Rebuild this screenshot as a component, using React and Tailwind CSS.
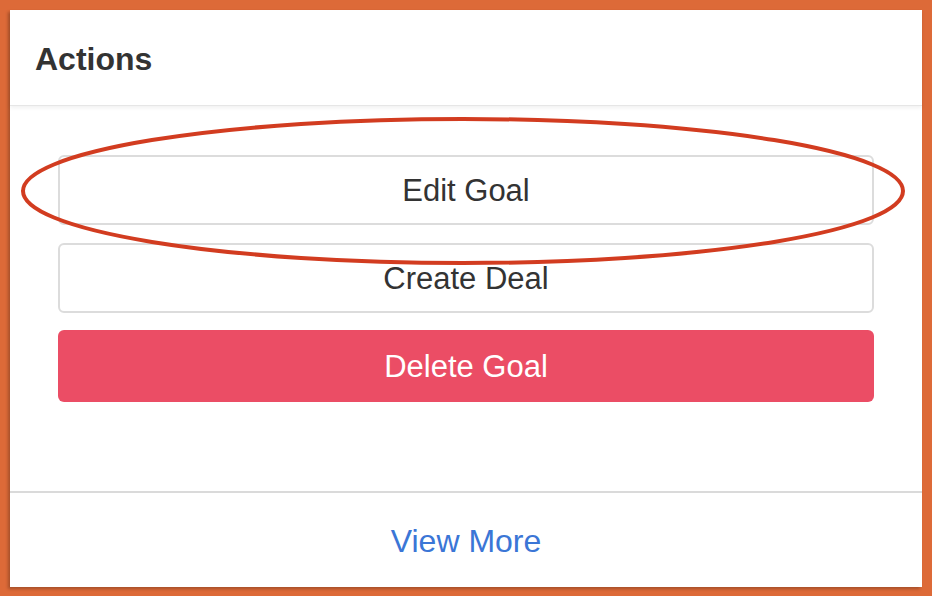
import React from "react";

const font = { fontFamily: '"Liberation Sans", Arial, sans-serif' };

const ActionButton = ({ label, danger, className = "" }) => (
  <button
    className={
      (danger
        ? "h-[72px] w-full rounded-[6px] bg-[#eb4d65] pt-[3px] text-[31px] text-white "
        : "h-[70px] w-full rounded-[6px] border-2 border-[#dcdcdc] bg-white pt-[3px] text-[31px] text-[#333333] ") + className
    }
  >
    {label}
  </button>
);

export default function App() {
  return (
    <div className="h-[596px] w-[932px] bg-[#dd6a38] pt-[10px] pl-[10px]" style={font}>
      <div className="relative flex h-[577px] w-[912px] flex-col bg-white shadow-[-2px_2px_3px_rgba(0,0,0,0.25)]">
        <div className="flex h-[96px] items-center border-b border-[#e6e6e6] px-[25px] pt-[2px] shadow-[0_2px_4px_rgba(0,0,0,0.06)]">
          <h2 className="text-[32px] font-bold text-[#333333]">Actions</h2>
        </div>
        <div className="flex flex-1 flex-col px-[48px] pt-[49px]">
          <ActionButton label="Edit Goal" />
          <ActionButton label="Create Deal" className="mt-[18px]" />
          <ActionButton label="Delete Goal" danger className="mt-[17px]" />
        </div>
        <div className="flex h-[96px] items-center justify-center border-t-2 border-[#dadada] pt-[2px]">
          <a className="text-[32px] text-[#3b76d6]" href="#">
            View More
          </a>
        </div>
        <svg
          className="pointer-events-none absolute left-0 top-0"
          width="912"
          height="577"
          viewBox="0 0 912 577"
        >
          <ellipse cx="453" cy="181" rx="440" ry="72" fill="none" stroke="#d23c20" strokeWidth="4" />
        </svg>
      </div>
    </div>
  );
}
